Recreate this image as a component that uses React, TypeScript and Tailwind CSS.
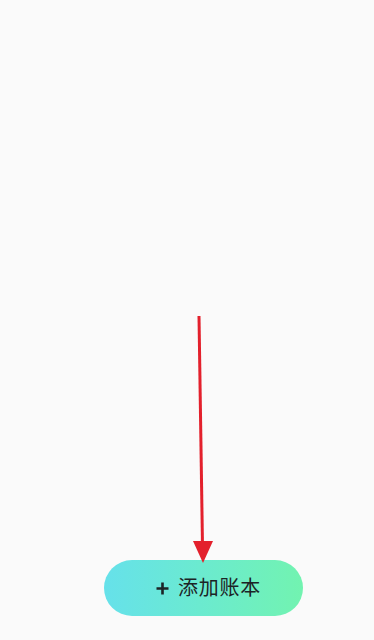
export default function App() {
  return (
    <div className="relative h-[640px] w-full bg-[#fafafa] overflow-hidden flex flex-col justify-end pb-[24px]" style={{ fontFamily: '"Noto Sans", "Noto Sans CJK SC", sans-serif' }}>
      {/* add account book button */}
      <button className="ml-[104px] w-[199px] h-[56px] rounded-full bg-gradient-to-r from-[#66e1ea] to-[#72f3b0] flex items-center justify-center gap-[9px] pl-[10px] text-[#1c2426]">
        <svg width="13" height="13" viewBox="0 0 13 13" className="shrink-0">
          <path d="M6.5 0.5v12M0.5 6.5h12" stroke="#1c2426" strokeWidth="2.6" />
        </svg>
        <span className="text-[20px] leading-none tracking-[0.8px]">添加账本</span>
      </button>

      {/* annotation arrow */}
      <svg className="absolute left-0 top-0 pointer-events-none" width="374" height="640" viewBox="0 0 374 640">
        <line x1="199" y1="316" x2="202.5" y2="546" stroke="#e3202c" strokeWidth="3" />
        <polygon points="193,541 213,541 203,563" fill="#e3202c" />
      </svg>
    </div>
  );
}
